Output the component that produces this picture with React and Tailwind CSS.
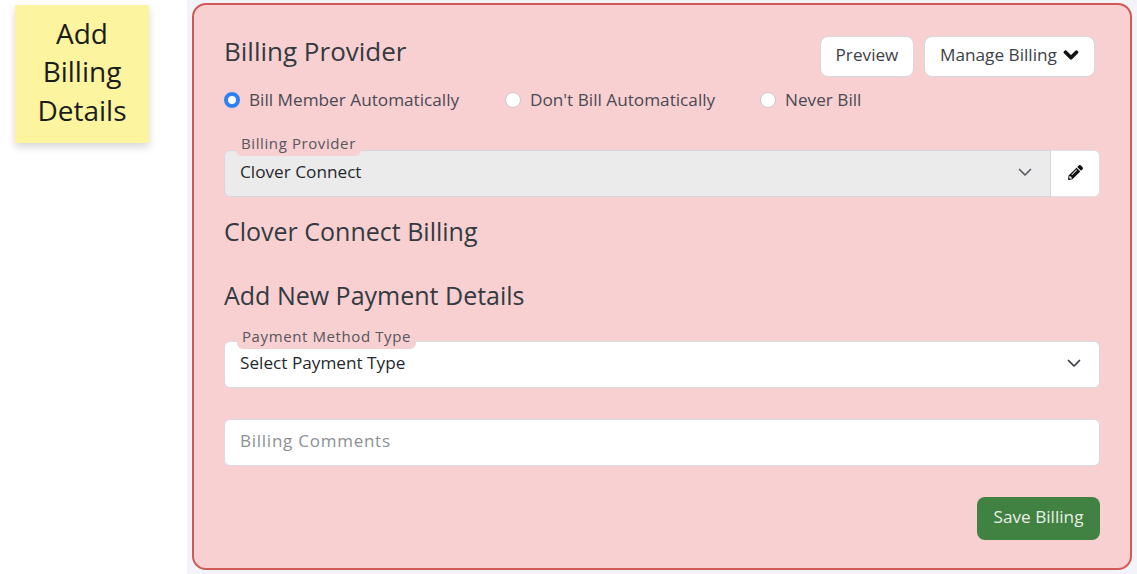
import { FaChevronDown, FaPencilAlt } from 'react-icons/fa'

function Radio({ checked, label, className }) {
  return (
    <label className={`flex items-center gap-[9px] ${className}`}>
      {checked ? (
        <span className="h-4 w-4 rounded-full border-[4px] border-[#2f80f7] bg-white" />
      ) : (
        <span className="h-4 w-4 rounded-full border border-[#c9c9cc] bg-white" />
      )}
      <span className="text-[17.2px] leading-6 text-[#4a4a52]">{label}</span>
    </label>
  )
}

function Caret({ color }) {
  return (
    <svg width="16" height="16" viewBox="0 0 16 16" fill="none" stroke={color} strokeWidth="1.7" strokeLinecap="round" strokeLinejoin="round">
      <path d="M2.5 5.5 8 11l5.5-5.5" />
    </svg>
  )
}

function FloatLabel({ children, className }) {
  return (
    <span className={`absolute h-[21px] rounded-md bg-[#f8d0d2] px-[5px] text-[15px] leading-[17px] tracking-[0.6px] text-[#56565c] ${className}`}>
      {children}
    </span>
  )
}

export default function App() {
  return (
    <div className="flex h-[574px] w-[1137px] overflow-hidden bg-white font-['Open_Sans',sans-serif]">
      <div className="w-[187px] shrink-0 pl-[15px] pt-[5px]">
        <div className="flex h-[138px] w-[134px] flex-col justify-center bg-[#fdf49f] pb-[5px] text-center text-[28px] leading-[38.5px] text-[#1c1c1c] shadow-[0_4px_8px_rgba(0,0,0,0.16)]">
          <span>Add</span>
          <span>Billing</span>
          <span>Details</span>
        </div>
      </div>

      <div className="flex-1 bg-[#f3f3fa] pb-[4px] pl-[5px] pr-[5px] pt-[3px]">
        <div className="h-[567px] rounded-[14px] border-2 border-[#cf5a56] bg-[#f8d0d2] pl-[30px] pr-[30px] pt-[31px]">
          <div className="flex h-[37px] items-start justify-between">
            <h2 className="-mt-[3px] text-[26px] font-medium leading-9 text-[#343a40]">Billing Provider</h2>
            <div className="flex gap-[10px] pr-[5px]">
              <button className="h-[41px] w-[94px] rounded-lg border border-[#d5d8dc] bg-white pb-[4px] text-[17.2px] text-[#3d4248]">Preview</button>
              <button className="flex h-[41px] w-[171px] items-center gap-[6px] rounded-lg border border-[#d5d8dc] bg-white pb-[4px] pl-[15px] text-[17.2px] text-[#3d4248]">
                Manage Billing
                <FaChevronDown className="h-4 w-4 stroke-[40] text-[#111]" />
              </button>
            </div>
          </div>

          <div className="mt-[15px] flex items-center">
            <Radio checked label="Bill Member Automatically" className="w-[281px]" />
            <Radio label="Don't Bill Automatically" className="w-[255px]" />
            <Radio label="Never Bill" />
          </div>

          <div className="relative mt-[38px] flex h-[47px]">
            <FloatLabel className="-top-[15px] left-[12px]">Billing Provider</FloatLabel>
            <div className="flex flex-1 items-center justify-between rounded-l-md border border-[#d4d8dc] bg-[#ebebeb] pb-[3px] pl-[15px] pr-[17px] text-[17.2px] text-[#26282b]">
              Clover Connect
              <Caret color="#5a5f66" />
            </div>
            <div className="flex w-[49px] items-center justify-center rounded-r-md border border-l-0 border-[#e0e2e5] bg-white pb-[3px]">
              <FaPencilAlt className="h-[15px] w-[15px] text-[#111]" />
            </div>
          </div>

          <h3 className="mt-[16px] text-[25px] font-medium leading-9 text-[#343a40]">Clover Connect Billing</h3>
          <h3 className="mt-[28px] text-[25px] font-medium leading-9 text-[#343a40]">Add New Payment Details</h3>

          <div className="relative mt-[28px] flex h-[47px] items-center justify-between rounded-md border border-[#d8dbdf] bg-white pb-[4px] pl-[15px] pr-[17px] text-[17.2px] text-[#26282b]">
            <FloatLabel className="-top-[14px] left-[12px]">Payment Method Type</FloatLabel>
            Select Payment Type
            <Caret color="#343a40" />
          </div>

          <div className="mt-[31px] flex h-[47px] items-center rounded-md border border-[#d8dbdf] bg-white pb-[3px] pl-[15px] text-[17px] tracking-[0.75px] text-[#8d9095]">
            Billing Comments
          </div>

          <div className="mt-[31px] flex justify-end">
            <button className="h-[43px] w-[123px] rounded-lg bg-[#418141] pb-[4px] text-[17.2px] text-[#e6f0e6]">Save Billing</button>
          </div>
        </div>
      </div>
    </div>
  )
}
